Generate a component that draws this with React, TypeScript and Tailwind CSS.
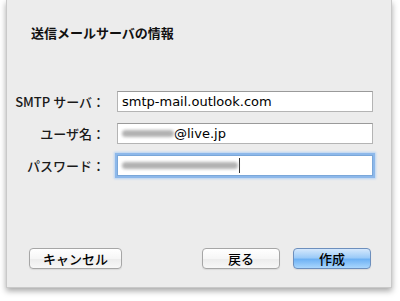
const jp = "font-['Noto_Sans_CJK_JP','Noto_Sans',sans-serif]";
const latin = "font-['DejaVu_Sans','Noto_Sans_CJK_JP',sans-serif]";

function Field({ label, children, focused }: { label: string; children: React.ReactNode; focused?: boolean }) {
  return (
    <div className="flex items-center h-[21px]">
      <div className={`w-[100px] text-right pr-[2px] text-[13px] font-medium text-[#1a1a1a] ${jp}`}>{label}</div>
      <div
        className={`ml-[10px] w-[256px] h-[21px] bg-white flex items-center px-[4px] text-[13px] text-black ${latin} ${
          focused
            ? 'border border-[#7aa7d9] shadow-[0_0_0_2px_#8db8ea,0_0_2px_3px_#b7d3f3]'
            : 'border border-[#b4b4b4] border-t-[#9a9a9a]'
        }`}
      >
        {children}
      </div>
    </div>
  );
}

function Blur({ w }: { w: number }) {
  return <span className="inline-block h-[7px] bg-[#b2b2b2] blur-[1.5px] rounded-sm" style={{ width: w }} />;
}

function Btn({ children, primary, w }: { children: React.ReactNode; primary?: boolean; w: string }) {
  return (
    <button
      className={`${w} h-[21px] rounded-[4px] border text-[13px] font-medium leading-none text-black ${jp} ${
        primary
          ? 'border-[#6d8fbd] bg-[linear-gradient(#d5e8fc_0%,#9ccbf8_45%,#6fb2f4_55%,#a9d6fd_100%)]'
          : 'border-[#a6a6a6] bg-[linear-gradient(#ffffff_0%,#f6f6f6_50%,#ececec_52%,#f7f7f7_100%)]'
      } shadow-[0_1px_1px_rgba(0,0,0,0.08)]`}
    >
      {children}
    </button>
  );
}

export default function App() {
  return (
    <div className="w-[400px] h-[301px] bg-white overflow-hidden">
      <div className="ml-[6px] w-[386px] h-[288px] bg-[#ececec] border-x border-b border-[#c9c9c9] shadow-[0_3px_6px_rgba(0,0,0,0.35)] flex flex-col">
        <div className={`pl-[24px] pt-[24px] text-[13px] font-bold text-[#111] leading-[18px] ${jp}`}>送信メールサーバの情報</div>
        <div className="mt-[49px] flex flex-col gap-[11px]">
          <Field label="SMTP サーバ：">smtp-mail.outlook.com</Field>
          <Field label="ユーザ名：">
            <Blur w={52} />
            <span>@live.jp</span>
          </Field>
          <Field label="パスワード：" focused>
            <Blur w={116} />
            <span className="inline-block w-[1px] h-[15px] bg-[#333] ml-[1px]" />
          </Field>
        </div>
        <div className="mt-auto mb-[18px] flex items-center pl-[22px] pr-[20px]">
          <Btn w="w-[93px]">キャンセル</Btn>
          <div className="flex-1" />
          <Btn w="w-[78px]">戻る</Btn>
          <div className="w-[13px]" />
          <Btn w="w-[78px]" primary>作成</Btn>
        </div>
      </div>
    </div>
  );
}
